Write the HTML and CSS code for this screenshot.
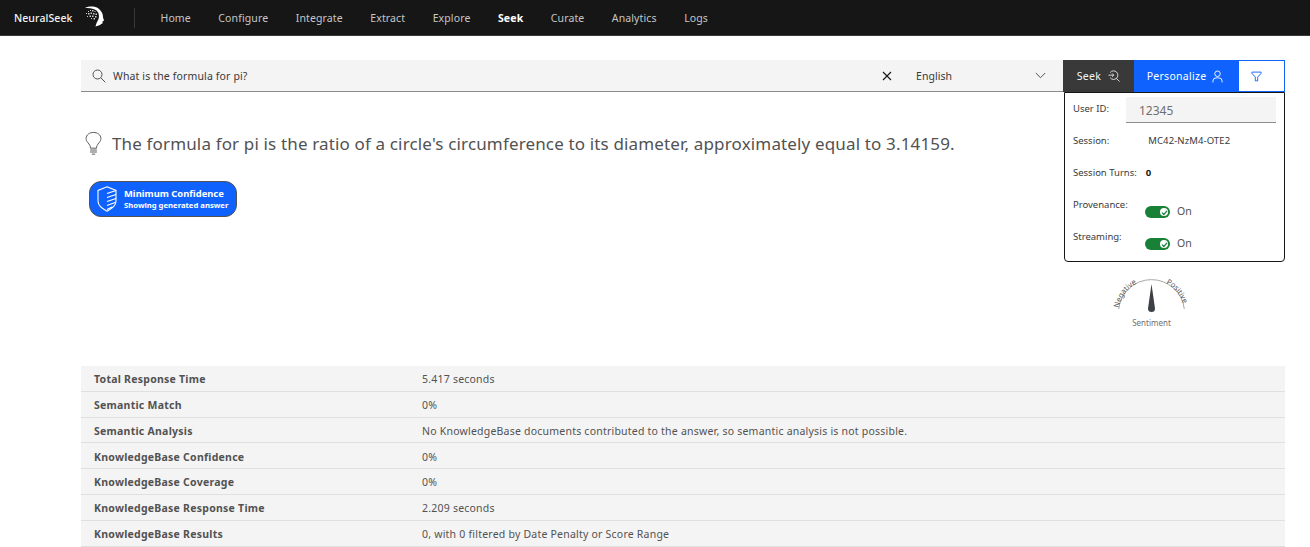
FILE: index.html
```html
<!DOCTYPE html>
<html lang="en">
<head>
<meta charset="utf-8">
<title>NeuralSeek</title>
<link rel="stylesheet" href="styles.css">
</head>
<body>
<header class="topbar">
  <div class="brand">
    <span class="brand-name">NeuralSeek</span>
    <svg class="brand-logo" width="22" height="22" viewBox="0 0 22 22" aria-hidden="true">
      <path d="M2 2C6 0 12 0 15.500 2.500 18.500 4.800 20 8 20 11c0 1.500 1 2.500 1 3.500l-1.500 1 0 2-1.500 .5c-.5 1-2 1.300-5.500 2.500 .5-3 2-5 3-7.500 1-3 .5-6.500-2-8.500C11 2.500 7 1.600 2 2z" fill="#fff"/>
      <g fill="#d0d0d0">
        <rect x="5" y="5" width="1" height="1"/><rect x="7" y="4" width="1" height="1"/><rect x="9" y="4" width="1.500" height="1.500"/><rect x="11.500" y="5" width="1" height="1"/>
        <rect x="3" y="7" width="1" height="1"/><rect x="5" y="7" width="1.500" height="1.500"/><rect x="7.500" y="6.500" width="1.500" height="1.500"/><rect x="10" y="7" width="1.500" height="1.500"/><rect x="12.500" y="7.500" width="1.500" height="1.500"/>
        <rect x="4" y="10" width="1" height="1"/><rect x="6.500" y="9.500" width="1.500" height="1.500"/><rect x="9" y="9.500" width="1.500" height="1.500"/><rect x="12" y="10" width="1.500" height="1.500"/>
        <rect x="8" y="12" width="1" height="1"/><rect x="10.500" y="12" width="1.500" height="1.500"/>
      </g>
    </svg>
  </div>
  <span class="divider"></span>
  <nav class="nav">
    <a class="nav-link">Home</a>
    <a class="nav-link">Configure</a>
    <a class="nav-link">Integrate</a>
    <a class="nav-link">Extract</a>
    <a class="nav-link">Explore</a>
    <a class="nav-link nav-active">Seek</a>
    <a class="nav-link">Curate</a>
    <a class="nav-link">Analytics</a>
    <a class="nav-link">Logs</a>
  </nav>
</header>

<main class="page">
  <section class="toolbar">
    <div class="search">
      <svg class="search-icon" width="14" height="14" viewBox="0 0 14 14" fill="none" stroke="#525252" stroke-width="1" aria-hidden="true"><circle cx="5.500" cy="5.500" r="4.500"/><path d="M8.800 8.800l4.500 4.500"/></svg>
      <span class="search-text">What is the formula for pi?</span>
      <svg class="clear-icon" width="10" height="10" viewBox="0 0 10 10" stroke="#161616" stroke-width="1.100" aria-hidden="true"><path d="M1 1l8 8M9 1l-8 8"/></svg>
      <div class="lang">
        <span>English</span>
        <svg width="11" height="7" viewBox="0 0 11 7" fill="none" stroke="#525252" stroke-width="1" aria-hidden="true"><path d="M.8 1l4.700 4.700L10.200 1"/></svg>
      </div>
    </div>
    <button class="btn btn-seek">Seek
      <svg width="12" height="12" viewBox="0 0 14 14" fill="none" stroke="#e0e0e0" stroke-width="1.100" aria-hidden="true"><path d="M2.500 3A5 5 0 1 1 2.500 9M.5 6h6M4.800 4l2 2-2 2M9.500 9.500l4 4"/></svg>
    </button>
    <button class="btn btn-personalize">Personalize
      <svg width="11" height="13" viewBox="0 0 12 14" fill="none" stroke="#fff" stroke-width="1" aria-hidden="true"><circle cx="6" cy="4" r="3"/><path d="M1 13.500v-1.500a3.500 3.500 0 0 1 3.500-3.500h3a3.500 3.500 0 0 1 3.500 3.500v1.500"/></svg>
    </button>
    <button class="btn btn-filter" aria-label="Filter">
      <svg width="11" height="11" viewBox="0 0 12 12" fill="none" stroke="#0f62fe" stroke-width="1" aria-hidden="true"><path d="M1 1.200h10v1.300L7.300 6.600v4.200H4.700V6.600L1 2.500z"/></svg>
    </button>

    <div class="popup">
      <div class="popup-row popup-user">
        <span class="popup-label">User ID:</span>
        <span class="popup-input">12345</span>
      </div>
      <div class="popup-row popup-session">
        <span class="popup-label">Session:</span>
        <span class="popup-session-id">MC42-NzM4-OTE2</span>
      </div>
      <div class="popup-row popup-turns">
        <span class="popup-label">Session Turns:</span>
        <span class="popup-count">0</span>
      </div>
      <div class="popup-row popup-toggle">
        <span class="popup-label">Provenance:</span>
        <span class="toggle"><span class="toggle-knob"><svg width="7" height="7" viewBox="0 0 7 7" fill="none" stroke="#198038" stroke-width="1.200"><path d="M1 3.700l1.800 1.800L6 1.800"/></svg></span></span>
        <span class="toggle-text">On</span>
      </div>
      <div class="popup-row popup-toggle">
        <span class="popup-label">Streaming:</span>
        <span class="toggle"><span class="toggle-knob"><svg width="7" height="7" viewBox="0 0 7 7" fill="none" stroke="#198038" stroke-width="1.200"><path d="M1 3.700l1.800 1.800L6 1.800"/></svg></span></span>
        <span class="toggle-text">On</span>
      </div>
    </div>
  </section>

  <section class="result">
    <div class="answer-col">
      <div class="answer">
        <svg class="bulb" width="17" height="25" viewBox="0 0 20 28" fill="none" stroke="#525252" stroke-width="1.100" aria-hidden="true"><path d="M6.500 19.500c0-3-1.200-4-3-6.300C2 11.300 1.300 9.800 1.300 8.200 1.300 3.800 5.200 1 10 1s8.700 2.800 8.700 7.200c0 1.600-.7 3.100-2.200 5-1.800 2.300-3 3.300-3 6.300z"/><path d="M6 21.700h8M6 24h8M8 26.500h4"/></svg>
        <p class="answer-text">The formula for pi is the ratio of a circle's circumference to its diameter, approximately equal to 3.14159.</p>
      </div>
      <div class="badge">
        <svg width="20" height="26" viewBox="0 0 20 26" fill="none" stroke="#fff" stroke-width="1.100" aria-hidden="true"><path d="M10 .8l9 3.600v10.600c0 4.500-4 7.600-9 10.200C5 22.600 1 19.500 1 15V4.400z"/><path d="M10 7.500l9-3M10 11.500l9-3M10 15.500l9-3M10 19.500l8-3M10 23.500l5-2.500" stroke-width="1.300"/></svg>
        <div class="badge-text">
          <strong>Minimum Confidence</strong>
          <span>Showing generated answer</span>
        </div>
      </div>
    </div>
    <div class="gauge-col">
      <svg class="gauge" width="94" height="62" viewBox="-6 -6 94 62">
        <defs>
          <path id="arc-l" d="M7.500 34A33 33 0 0 1 40.500 1"/>
          <path id="arc-r" d="M40.500 1A33 33 0 0 1 73.500 34"/>
        </defs>
        <path d="M7.700 30A33 33 0 0 1 73.300 30" fill="none" stroke="#a8a8a8" stroke-width="1"/>
        <text class="gauge-arc-text"><textPath href="#arc-l" startOffset="5">Negative</textPath></text>
        <text class="gauge-arc-text"><textPath href="#arc-r" startOffset="15">Positive</textPath></text>
        <path d="M40.500 5L37 29.500a3.500 3.500 0 0 0 7 0z" fill="#3d4145"/>
        <text class="gauge-label" x="40.500" y="47" text-anchor="middle">Sentiment</text>
      </svg>
    </div>
  </section>

  <section class="stats">
    <div class="stat"><span class="stat-key">Total Response Time</span><span class="stat-val">5.417 seconds</span></div>
    <div class="stat"><span class="stat-key">Semantic Match</span><span class="stat-val">0%</span></div>
    <div class="stat"><span class="stat-key">Semantic Analysis</span><span class="stat-val">No KnowledgeBase documents contributed to the answer, so semantic analysis is not possible.</span></div>
    <div class="stat"><span class="stat-key">KnowledgeBase Confidence</span><span class="stat-val">0%</span></div>
    <div class="stat"><span class="stat-key">KnowledgeBase Coverage</span><span class="stat-val">0%</span></div>
    <div class="stat"><span class="stat-key">KnowledgeBase Response Time</span><span class="stat-val">2.209 seconds</span></div>
    <div class="stat"><span class="stat-key">KnowledgeBase Results</span><span class="stat-val">0, with 0 filtered by Date Penalty or Score Range</span></div>
  </section>
</main>
</body>
</html>
```
FILE: styles.css
```css
* { box-sizing: border-box; }
html, body { margin: 0; padding: 0; }
body {
  background: #fff;
  color: #161616;
  font-family: "Noto Sans", "Open Sans", sans-serif;
  font-size: 11px;
  height: 547px;
  overflow: hidden;
}
.topbar {
  height: 36px;
  background: #161616;
  border-bottom: 1px solid #393939;
  display: flex;
  align-items: center;
  padding-left: 14px;
}
.brand { display: flex; align-items: center; width: 120px; }
.brand-name { color: #f4f4f4; font-size: 10.500px; font-weight: 500; width: 67px; letter-spacing: .1px; }
.brand-logo { margin-top: -2px; margin-left: 2px; }
.divider { width: 1px; height: 20px; background: #393939; }
.nav { display: flex; margin-left: 25.500px; gap: 27.500px; }
.nav-link { color: #c6c6c6; font-size: 10.500px; letter-spacing: .12px; }
.nav-active { color: #fff; font-weight: 700; }

.page { padding: 24px 25px 0 81px; }
.toolbar { display: flex; height: 32px; position: relative; }
.search {
  flex: 1;
  display: flex;
  align-items: center;
  background: #f4f4f4;
  border-bottom: 1px solid #8d8d8d;
  padding-left: 11px;
  font-size: 10.500px;
}
.search-icon { margin-right: 7px; }
.search-text { flex: 1; color: #393939; letter-spacing: .14px; }
.clear-icon { margin-right: 24px; }
.lang {
  width: 147px;
  display: flex;
  align-items: center;
  justify-content: space-between;
  padding-right: 17px;
  color: #393939;
  letter-spacing: .05px;
}
.btn {
  border: 0;
  font: inherit;
  font-size: 10.500px;
  letter-spacing: .28px;
  display: flex;
  align-items: center;
  justify-content: center;
  gap: 6px;
  padding: 0;
  height: 32px;
}
.btn-seek { width: 71px; background: #393939; color: #f4f4f4; gap: 7px; }
.btn-personalize { width: 105px; background: #0f62fe; color: #fff; padding-right: 3px; }
.btn-filter { width: 46px; background: #fff; border: 1px solid #0f62fe; border-left: 0; padding-right: 10px; }

.popup {
  position: absolute;
  right: 0;
  top: 32px;
  width: 221px;
  height: 170px;
  background: #fff;
  border: 1px solid #161616;
  border-radius: 0 0 4px 4px;
  font-size: 9.500px;
  color: #393939;
}
.popup-row { position: relative; display: flex; padding-left: 8px; }
.popup-label { display: block; }
.popup-user { height: 41px; padding-top: 9px; }
.popup-input {
  position: absolute;
  left: 61px;
  top: 4px;
  width: 150px;
  height: 26px;
  background: #f4f4f4;
  border-bottom: 1px solid #8d8d8d;
  padding: 5px 13px;
  font-size: 12px;
  color: #6f6f6f;
}
.popup-session { height: 31.500px; }
.popup-session-id { margin-left: 39px; letter-spacing: .1px; }
.popup-turns { height: 32.500px; }
.popup-count { margin-left: 9px; font-weight: 700; color: #161616; font-size: 9.500px; }
.popup-toggle { height: 32px; }
.toggle {
  position: absolute;
  left: 80px;
  top: 8px;
  width: 25px;
  height: 12px;
  border-radius: 6px;
  background: #198038;
}
.toggle-knob {
  position: absolute;
  right: 2px;
  top: 2px;
  width: 8px;
  height: 8px;
  border-radius: 50%;
  background: #fff;
  display: flex;
  align-items: center;
  justify-content: center;
}
.toggle-text { position: absolute; left: 112px; top: 6px; font-size: 10.500px; color: #525252; }

.result { display: flex; height: 274px; }
.answer-col { flex: 1; padding-top: 39px; }
.answer { display: flex; align-items: center; gap: 10px; padding-left: 4px; }
.answer-text { margin: 0; font-size: 17px; color: #525252; white-space: nowrap; letter-spacing: .15px; }
.badge {
  margin: 25px 0 0 8px;
  width: 148px;
  height: 36px;
  border-radius: 12px;
  background: #0f62fe;
  border: 1px solid #525252;
  display: flex;
  align-items: center;
  gap: 7px;
  padding-left: 7px;
  color: #fff;
}
.badge-text { display: flex; flex-direction: column; }
.badge-text strong { font-size: 9.400px; line-height: 12px; font-weight: 700; }
.badge-text span { font-size: 7.700px; line-height: 11px; font-weight: 700; }

.gauge-col { width: 267px; }
.gauge { display: block; margin: 181px 0 0 87px; }
.gauge-arc-text { font-size: 7.500px; fill: #525252; }
.gauge-label { font-size: 8px; fill: #6f6f6f; }

.stats { width: 100%; background: #f4f4f4; }
.stat {
  display: flex;
  align-items: center;
  height: 25.800px;
  border-bottom: 1px solid #e0e0e0;
  padding: 1.600px 0 0 13px;
  font-size: 10.500px;
}
.stat-key { width: 328px; font-weight: 700; color: #525252; letter-spacing: .25px; }
.stat-val { color: #525252; letter-spacing: .22px; }
```
